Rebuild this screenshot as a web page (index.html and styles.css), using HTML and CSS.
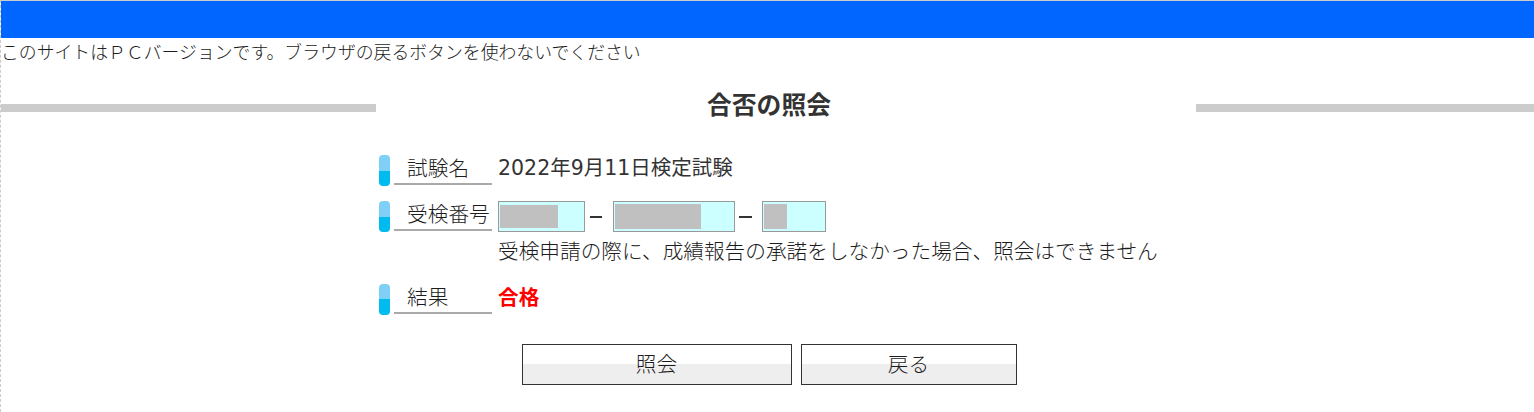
FILE: index.html
```html
<!DOCTYPE html>
<html lang="ja">
<head>
<meta charset="utf-8">
<title>合否の照会</title>
<link rel="stylesheet" href="styles.css">
</head>
<body>
<div class="page">
  <div class="topbar"></div>
  <p class="notice">このサイトはＰＣバージョンです。ブラウザの戻るボタンを使わないでください</p>
  <div class="heading">
    <span class="rule rule-left"></span>
    <h1 class="title">合否の照会</h1>
    <span class="rule rule-right"></span>
  </div>
  <div class="form">
    <div class="row row-name">
      <span class="pill"></span>
      <span class="label">試験名</span>
      <span class="value date">2022年9月11日検定試験</span>
    </div>
    <div class="row row-number">
      <span class="pill"></span>
      <span class="label">受検番号</span>
      <div class="inputs">
        <span class="field f1"><span class="mask m1"></span></span>
        <span class="dash d1"></span>
        <span class="field f2"><span class="mask m2"></span></span>
        <span class="dash d2"></span>
        <span class="field f3"><span class="mask m3"></span></span>
      </div>
    </div>
    <p class="hint">受検申請の際に、成績報告の承諾をしなかった場合、照会はできません</p>
    <div class="row row-result">
      <span class="pill"></span>
      <span class="label">結果</span>
      <span class="value pass">合格</span>
    </div>
  </div>
  <div class="actions">
    <button class="btn btn-query" type="button">照会</button>
    <button class="btn btn-back" type="button">戻る</button>
  </div>
</div>
</body>
</html>
```
FILE: styles.css
```css
html, body {
  margin: 0;
  padding: 0;
  background: #fff;
}
body {
  font-family: "Noto Sans CJK JP", "Noto Sans", sans-serif;
  font-weight: 300;
  color: #1c1c1c;
  overflow: hidden;
}
.page {
  height: 411px;
  border-top: 1px solid #ccc;
  border-left: 1px dashed #ccc;
  overflow: hidden;
}
.topbar {
  height: 37px;
  background: #0066ff;
}
.notice {
  margin: 0;
  height: 28px;
  font-size: 17.85px;
  line-height: 27px;
  white-space: nowrap;
}
.heading {
  display: flex;
  align-items: flex-start;
  height: 84px;
}
.rule {
  height: 8px;
  margin-top: 38px;
  background: #ccc;
}
.rule-left { width: 375px; }
.rule-right { flex: 1; }
.title {
  box-sizing: border-box;
  width: 820px;
  margin: 0;
  padding: 19px 34px 0 0;
  text-align: center;
  font-size: 24.8px;
  line-height: 36px;
  font-weight: 700;
  color: #333;
}
.form {
  margin-left: 378px;
  padding-top: 5px;
}
.row {
  display: flex;
  align-items: flex-start;
  height: 31px;
}
.row-number { margin-top: 15px; }
.row-result { margin-top: 16px; }
.pill {
  width: 11px;
  height: 31px;
  border-radius: 4px;
  background: linear-gradient(#7fd0f7 50%, #00bbf0 50%);
}
.label {
  width: 85px;
  height: 28px;
  margin-left: 4px;
  padding-left: 13px;
  font-size: 20.7px;
  line-height: 25px;
  border-bottom: 2px solid #aaa;
}
.value {
  margin-left: 6px;
  font-size: 20.7px;
  line-height: 26px;
  white-space: nowrap;
}
.date {
  font-family: "DejaVu Sans", "Noto Sans CJK JP", sans-serif;
  font-size: 20.5px;
  font-weight: 400;
  color: #333;
  line-height: 27px;
}
.pass {
  color: #f00;
  font-weight: 700;
  line-height: 24px;
}
.inputs {
  display: flex;
  align-items: center;
  margin-left: 6px;
  height: 31px;
}
.field {
  display: flex;
  align-items: center;
  box-sizing: border-box;
  height: 31px;
  padding-left: 1px;
  background: #ccffff;
  border: 1px solid #999;
}
.f1 { width: 87px; }
.f2 { width: 122px; }
.f3 { width: 64px; }
.mask {
  display: block;
  background: #c0c0c0;
}
.m1 { width: 58px; height: 23px; }
.m2 { width: 86px; height: 25px; }
.m3 { width: 23px; height: 25px; }
.dash {
  height: 2px;
  background: #333;
}
.d1 { width: 12px; margin: 0 11px 0 5px; }
.d2 { width: 13px; margin: 0 10px 0 4px; }
.hint {
  margin: 0 0 0 119px;
  font-size: 20.67px;
  line-height: 36px;
  height: 36px;
  white-space: nowrap;
}
.actions {
  display: flex;
  justify-content: center;
  gap: 9px;
  margin-top: 29px;
  margin-left: 3px;
}
.btn {
  box-sizing: border-box;
  height: 41px;
  padding: 0 0 3px;
  font-family: inherit;
  font-weight: 300;
  font-size: 20.7px;
  line-height: 34px;
  color: #1c1c1c;
  border: 1px solid #333;
  border-radius: 0;
  background: linear-gradient(#fff 50%, #eee 50%);
}
.btn-query { width: 270px; }
.btn-back { width: 216px; }
```
